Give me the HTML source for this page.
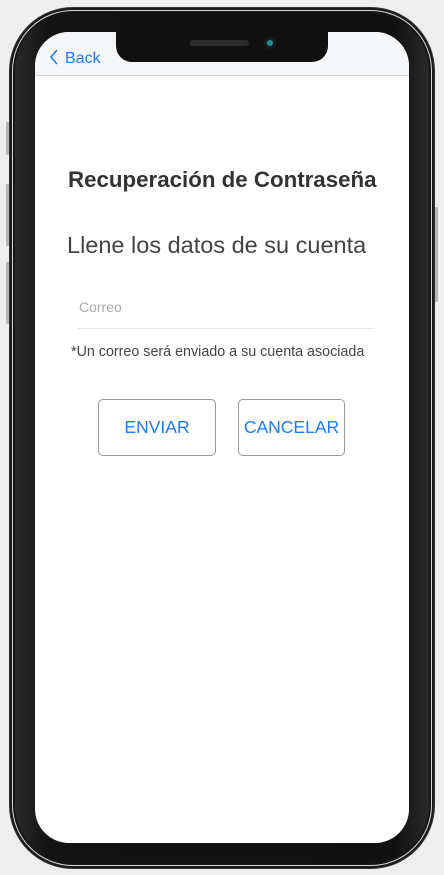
<!DOCTYPE html>
<html><head><meta charset="utf-8"><style>
*{margin:0;padding:0;box-sizing:border-box}
body{width:444px;height:875px;background:#eeeeee;position:relative;overflow:hidden;font-family:"Liberation Sans",sans-serif}
.btn-side{position:absolute;background:#b5b5b5;width:4px;border-radius:1px}
.outer{position:absolute;left:9px;top:7px;width:426px;height:862px;border-radius:64px;background:#1a1a1a;border:1px solid #333}
.ring{position:absolute;left:12px;top:10px;width:420px;height:856px;border-radius:61px;border:1.5px solid #d8d8d8;background:#151515}
.bezel{position:absolute;left:15px;top:13px;width:414px;height:850px;border-radius:58px;background:linear-gradient(90deg,#2a2a2a,#131313 8%,#111 92%,#2a2a2a)}
.screen{position:absolute;left:35px;top:32px;width:374px;height:811px;border-radius:34px;background:#fff;overflow:hidden}
.hdr{position:absolute;left:0;top:0;width:374px;height:44px;background:#f5f6f8;border-bottom:1px solid #d9d9d9}
.back{position:absolute;left:14px;top:17px;color:#1e7cf0;font-size:16px}
.notch{position:absolute;left:116px;top:32px;width:212px;height:30px;background:#111;border-radius:0 0 16px 16px}
.spk{position:absolute;left:190px;top:40px;width:59px;height:6px;border-radius:3px;background:#2c2c2c}
.cam{position:absolute;left:264px;top:37px;width:12px;height:12px;border-radius:50%;background:#1c1c1c}
.cam:after{content:"";position:absolute;left:3px;top:3px;width:6px;height:6px;border-radius:50%;background:#1a8fa0}
.t{position:absolute;white-space:nowrap}
.b{position:absolute;top:399px;height:57px;border:1px solid #999;border-radius:5px;color:#1e7cf0;font-size:17.5px;display:flex;align-items:center;justify-content:center}
</style></head><body>
<div class="btn-side" style="left:6px;top:122px;height:33px"></div>
<div class="btn-side" style="left:6px;top:184px;height:62px"></div>
<div class="btn-side" style="left:6px;top:262px;height:62px"></div>
<div class="btn-side" style="left:434px;top:207px;height:95px"></div>
<div class="outer"></div><div class="ring"></div><div class="bezel"></div>
<div class="screen">
<div class="hdr"><div class="back"><svg width="10" height="16" viewBox="0 0 10 16" style="vertical-align:-2px;margin-right:6px"><path d="M8 1 L2 8 L8 15" fill="none" stroke="#1e7cf0" stroke-width="1.6"/></svg>Back</div></div>
</div>
<div class="notch"></div><div class="spk"></div><div class="cam"></div>
<div class="t" style="left:68px;top:167px;font-size:22.3px;font-weight:bold;color:#333">Recuperación de Contraseña</div>
<div class="t" style="left:67px;top:232px;font-size:23.5px;color:#444">Llene los datos de su cuenta</div>
<div class="t" style="left:79px;top:299px;font-size:14px;color:#aaa">Correo</div>
<div style="position:absolute;left:78px;top:328px;width:296px;height:1px;background:#e8e8e8"></div>
<div class="t" style="left:71px;top:344px;font-size:14.3px;color:#444">*Un correo será enviado a su cuenta asociada</div>
<div class="b" style="left:98px;width:118px">ENVIAR</div>
<div class="b" style="left:238px;width:107px">CANCELAR</div>
</body></html>
